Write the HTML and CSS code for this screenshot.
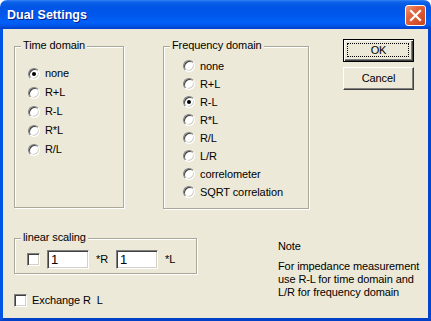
FILE: index.html
```html
<!DOCTYPE html>
<html>
<head>
<meta charset="utf-8">
<link rel="stylesheet" href="styles.css">
</head>
<body>
<div class="window">
  <div class="titlebar">
    <span class="title">Dual Settings</span>
    <span class="close">
      <svg width="21" height="21" viewBox="0 0 21 21">
        <path d="M6 6 L15 15 M15 6 L6 15" stroke="#fff" stroke-width="2.2" stroke-linecap="square" fill="none"/>
      </svg>
    </span>
  </div>
  <div class="client">
    <div class="top">
      <div class="group time">
        <span class="legend">Time domain</span>
        <div class="opt"><span class="radio checked"></span><span class="lbl">none</span></div>
        <div class="opt"><span class="radio"></span><span class="lbl">R+L</span></div>
        <div class="opt"><span class="radio"></span><span class="lbl">R-L</span></div>
        <div class="opt"><span class="radio"></span><span class="lbl">R*L</span></div>
        <div class="opt"><span class="radio"></span><span class="lbl">R/L</span></div>
      </div>
      <div class="group freq">
        <span class="legend">Frequency domain</span>
        <div class="opt"><span class="radio"></span><span class="lbl">none</span></div>
        <div class="opt"><span class="radio"></span><span class="lbl">R+L</span></div>
        <div class="opt"><span class="radio checked"></span><span class="lbl">R-L</span></div>
        <div class="opt"><span class="radio"></span><span class="lbl">R*L</span></div>
        <div class="opt"><span class="radio"></span><span class="lbl">R/L</span></div>
        <div class="opt"><span class="radio"></span><span class="lbl">L/R</span></div>
        <div class="opt"><span class="radio"></span><span class="lbl">correlometer</span></div>
        <div class="opt"><span class="radio"></span><span class="lbl">SQRT correlation</span></div>
      </div>
      <div class="buttons">
        <div class="btn default">OK</div>
        <div class="btn">Cancel</div>
      </div>
    </div>
    <div class="bottom">
      <div class="leftcol">
        <div class="group scaling">
          <span class="legend">linear scaling</span>
          <div class="scalerow">
            <span class="check"></span>
            <span class="field">1</span>
            <span class="unit">*R</span>
            <span class="field">1</span>
            <span class="unit last">*L</span>
          </div>
        </div>
        <div class="exchange"><span class="check"></span><span class="lbl">Exchange R  L</span></div>
      </div>
      <div class="note">
        <div class="notehead">Note</div>
        <p class="notetext">For impedance measurement<br>use R-L for time domain and<br>L/R for frequency domain</p>
      </div>
    </div>
  </div>
</div>
</body>
</html>
```

FILE: styles.css
```css
html, body {
  margin: 0;
  padding: 0;
  background: #ffffff;
}
* { box-sizing: border-box; }

.window {
  width: 431px;
  height: 321px;
  display: flex;
  flex-direction: column;
  font-family: "Liberation Sans", Arial, sans-serif;
  font-size: 11px;
  letter-spacing: -0.1px;
  color: #000;
}

.titlebar {
  height: 29px;
  flex: none;
  display: flex;
  align-items: flex-start;
  justify-content: space-between;
  border-radius: 7px 7px 0 0;
  background: linear-gradient(to bottom,
    #3d8cf5 0px, #1a6cf0 1px, #0a5fe6 3px, #0055e5 7px,
    #0057ec 15px, #0060f8 22px, #0058ec 25px, #0046d2 28px, #003dc8 29px);
}
.title {
  margin-left: 7px;
  margin-top: 8px;
  font-weight: bold;
  font-size: 12.5px;
  letter-spacing: 0;
  line-height: 15px;
  color: #fff;
  text-shadow: 1px 1px 0 #0a1f8a;
}
.close {
  width: 21px;
  height: 21px;
  margin-top: 5px;
  margin-right: 5px;
  border: 1px solid #fff;
  border-radius: 3px;
  background: linear-gradient(135deg, #f0967a 0%, #e2643e 35%, #d7512b 70%, #c8431f 100%);
  display: flex;
  align-items: center;
  justify-content: center;
}
.close svg { display: block; margin: -1px; }

.client {
  flex: 1;
  background: #ece9d8;
  border-style: solid;
  border-width: 0 3px 3px 3px;
  border-color: #0055e5 #0044cf #0041c8 #0055e5;
  padding: 10px 0 0 11px;
}

.top {
  display: flex;
  align-items: flex-start;
}

.group {
  position: relative;
  border: 1px solid #aca899;
  box-shadow: inset 1px 1px 0 #fff, 1px 1px 0 #fff;
}
.legend {
  position: absolute;
  top: -8px;
  left: 6px;
  padding: 0 2px;
  line-height: 13px;
  background: #ece9d8;
  white-space: nowrap;
}

.time {
  margin-top: 7px;
  width: 110px;
  height: 162px;
  padding: 17px 0 0 13px;
}
.time .opt { height: 19px; }

.freq {
  margin-top: 7px;
  margin-left: 39px;
  width: 146px;
  height: 163px;
  padding: 10px 0 0 19px;
}
.freq .opt { height: 18px; }

.opt {
  display: flex;
  align-items: center;
}
.lbl {
  margin-left: 5px;
  line-height: 13px;
  white-space: pre;
}

.radio {
  position: relative;
  flex: none;
  width: 12px;
  height: 12px;
  border-radius: 50%;
  background: #fff;
  border: 1px solid;
  border-color: #808080 #fff #fff #808080;
  box-shadow: inset 1px 1px 0 #404040, inset -1px -1px 0 #d4d0c8;
}
.radio.checked::after {
  content: "";
  position: absolute;
  left: 3px;
  top: 3px;
  width: 4px;
  height: 4px;
  border-radius: 50%;
  background: #000;
}

.check {
  flex: none;
  width: 13px;
  height: 13px;
  background: #fff;
  border: 1px solid;
  border-color: #808080 #fff #fff #808080;
  box-shadow: inset 1px 1px 0 #404040, inset -1px -1px 0 #d4d0c8;
}

.buttons {
  margin-left: 34px;
  width: 71px;
  display: flex;
  flex-direction: column;
  gap: 5px;
}
.btn {
  position: relative;
  height: 23px;
  display: flex;
  align-items: center;
  justify-content: center;
  line-height: 13px;
  background: #ece9d8;
  border: 1px solid;
  border-color: #fff #404040 #404040 #fff;
  box-shadow: inset -1px -1px 0 #808080;
}
.btn.default {
  border-color: #000;
  box-shadow: inset 1px 1px 0 #fff, inset -1px -1px 0 #404040, inset -2px -2px 0 #808080;
}
.btn.default::after {
  content: "";
  position: absolute;
  left: 3px;
  top: 3px;
  right: 4px;
  bottom: 4px;
  border: 1px dotted #000;
}

.bottom {
  display: flex;
  align-items: flex-start;
  margin-top: 29px;
}
.leftcol {
  width: 183px;
  display: flex;
  flex-direction: column;
}
.scaling {
  height: 36px;
  padding: 11px 0 0 12px;
}
.scalerow {
  display: flex;
  align-items: center;
  height: 19px;
}
.field {
  margin-left: 7px;
  width: 42px;
  height: 19px;
  padding-left: 3px;
  background: #fff;
  border: 1px solid;
  border-color: #808080 #fff #fff #808080;
  box-shadow: inset 1px 1px 0 #404040, inset -1px -1px 0 #d4d0c8;
  font-size: 13px;
  line-height: 17px;
}
.unit {
  margin-left: 7px;
  width: 13px;
  line-height: 13px;
}
.unit.last { width: auto; }

.exchange {
  margin-top: 20px;
  display: flex;
  align-items: center;
  height: 13px;
}

.note {
  margin-left: 81px;
  margin-top: 2px;
  line-height: 13px;
}
.notehead { line-height: 13px; }
.notetext {
  margin: 7px 0 0 0;
  line-height: 13px;
}
```
